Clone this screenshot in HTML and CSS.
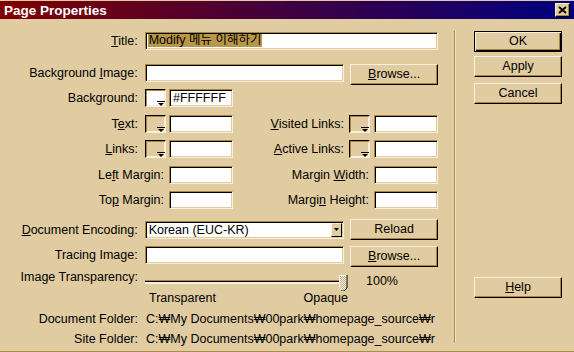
FILE: index.html
```html
<!DOCTYPE html>
<html lang="ko">
<head>
  <meta charset="UTF-8" />
  <title>Page Properties</title>
  <link rel="stylesheet" href="styles.css">
</head>
<body>
<div class="window">
  <div class="titlebar">
    <span class="caption">Page Properties</span>
    <span class="close">
      <svg width="9" height="8" viewBox="0 0 9 8"><path d="M1 1L8 7M8 1L1 7" stroke="#000" stroke-width="1.8" fill="none"/></svg>
    </span>
  </div>

  <div class="content">
    <div class="fields">
      <div class="row r-title">
        <span class="label"><u>T</u>itle:</span>
        <div class="field full"><span class="sel">Modify 메뉴 이해하기</span></div>
      </div>

      <div class="row r-bgimage">
        <span class="label">Background <u>I</u>mage:</span>
        <div class="field half"></div>
        <div class="btn side"><u>B</u>rowse...</div>
      </div>

      <div class="row r-bg">
        <span class="label">Back<u>g</u>round:</span>
        <span class="swatch white"><i class="arrow"></i></span>
        <div class="field small">#FFFFFF</div>
      </div>

      <div class="row r-text">
        <span class="label">T<u>e</u>xt:</span>
        <span class="swatch"><i class="arrow"></i></span>
        <div class="field small"></div>
        <span class="label2"><u>V</u>isited Links:</span>
        <span class="swatch"><i class="arrow"></i></span>
        <div class="field small gap4"></div>
      </div>

      <div class="row r-links">
        <span class="label"><u>L</u>inks:</span>
        <span class="swatch"><i class="arrow"></i></span>
        <div class="field small"></div>
        <span class="label2"><u>A</u>ctive Links:</span>
        <span class="swatch"><i class="arrow"></i></span>
        <div class="field small gap4"></div>
      </div>

      <div class="row r-left">
        <span class="label wide">Le<u>f</u>t Margin:</span>
        <div class="field small"></div>
        <span class="label2 wide">Margin <u>W</u>idth:</span>
        <div class="field small"></div>
      </div>

      <div class="row r-top">
        <span class="label wide">To<u>p</u> Margin:</span>
        <div class="field small"></div>
        <span class="label2 wide">Margi<u>n</u> Height:</span>
        <div class="field small"></div>
      </div>

      <div class="row r-enc">
        <span class="label"><u>D</u>ocument Encoding:</span>
        <div class="field half select">
          <span>Korean (EUC-KR)</span>
          <span class="drop"><svg width="5" height="3" viewBox="0 0 5 3"><path d="M0 0H5L2.5 3Z"/></svg></span>
        </div>
        <div class="btn side">Reload</div>
      </div>

      <div class="row r-trace">
        <span class="label">Tracing Image:</span>
        <div class="field half"></div>
        <div class="btn side"><u>B</u>rowse...</div>
      </div>

      <div class="row r-transp">
        <span class="label">Image Transparency:</span>
        <div class="slider">
          <div class="track"></div>
          <svg class="thumb" width="9" height="16" viewBox="0 0 9 16">
            <defs>
              <pattern id="dots" width="2" height="2" patternUnits="userSpaceOnUse">
                <rect width="2" height="2" fill="#F8F0DC"/>
                <rect width="1" height="1" fill="#C8B084"/>
                <rect x="1" y="1" width="1" height="1" fill="#C8B084"/>
              </pattern>
            </defs>
            <path d="M0.5 0.5H7.5V13L5 15.5H3L0.5 13Z" fill="url(#dots)" stroke="#F8F0DC"/>
            <path d="M8 0V13L5 16H2" stroke="#000" fill="none"/>
          </svg>
        </div>
        <span class="percent">100%</span>
      </div>

      <div class="row r-ends">
        <div class="ends"><span>Transparent</span><span>Opaque</span></div>
      </div>

      <div class="row r-docfolder">
        <span class="label">Document Folder:</span>
        <span class="path">C:₩My Documents₩00park₩homepage_source₩r</span>
      </div>

      <div class="row r-site">
        <span class="label">Site Folder:</span>
        <span class="path">C:₩My Documents₩00park₩homepage_source₩r</span>
      </div>
    </div>

    <div class="divider"></div>

    <div class="actions">
      <div class="btn default">OK</div>
      <div class="btn apply">Apply</div>
      <div class="btn cancel">Cancel</div>
      <div class="btn help"><u>H</u>elp</div>
    </div>
  </div>
</div>
</body>
</html>
```

FILE: styles.css
```css
body {
  margin: 0;
  background-color: #E0CCA0;
  font-family: "Liberation Sans", "Noto Sans CJK KR", sans-serif;
  font-size: 12.5px;
  color: #000;
}

u {
  text-decoration: underline;
  text-underline-offset: 1px;
}

.window {
  width: 574px;
  height: 351px;
  box-sizing: border-box;
  border-bottom: 1px solid #B08C40;
}

/* title bar */
.titlebar {
  margin-top: 1px;
  height: 18px;
  padding: 0 4px;
  display: flex;
  align-items: center;
  justify-content: space-between;
  background: linear-gradient(to right, #800000, #000080);
}

.caption {
  color: #fff;
  font-weight: bold;
  font-size: 13.5px;
}

.close {
  width: 15px;
  height: 14px;
  box-sizing: border-box;
  background-color: #E0CCA0;
  border: 1px solid;
  border-color: #F8F0DC #000 #000 #F8F0DC;
  box-shadow: inset -1px -1px 0 #A8843C;
  display: flex;
  align-items: center;
  justify-content: center;
}

.content {
  display: flex;
  align-items: flex-start;
}

/* left form */
.fields {
  width: 438px;
  padding-top: 13px;
}

.row {
  display: flex;
  align-items: center;
}

.label {
  width: 145px;
  padding-right: 7px;
  box-sizing: border-box;
  text-align: right;
  white-space: nowrap;
  line-height: 16px;
}

.label.wide {
  width: 169px;
  padding-right: 5px;
}

.label2 {
  width: 116px;
  padding-right: 5px;
  box-sizing: border-box;
  text-align: right;
  white-space: nowrap;
}

.label2.wide {
  width: 141px;
}

.field {
  box-sizing: border-box;
  height: 18px;
  padding: 0 3px;
  background-color: #fff;
  border: 1px solid;
  border-color: #A8843C #F8F0DC #F8F0DC #A8843C;
  box-shadow: inset 1px 1px 0 #000, inset -1px -1px 0 #E0CCA0;
  line-height: 16px;
  white-space: nowrap;
  overflow: hidden;
}

.field.full { width: 294px; padding-left: 2px; }
.field.half { width: 200px; }
.field.small { width: 64px; margin-left: 3px; }
.field.small.gap4 { margin-left: 4px; }
.r-left .field.small,
.r-top .field.small { margin-left: 0; }

.sel {
  display: inline-block;
  background-color: #B89848;
  padding: 0 1px;
  line-height: 13px;
  vertical-align: 1px;
}

.select {
  display: flex;
  align-items: center;
  justify-content: space-between;
  padding-right: 1px;
}

.drop {
  width: 11px;
  height: 14px;
  box-sizing: border-box;
  background-color: #E0CCA0;
  border: 1px solid;
  border-color: #F8F0DC #000 #000 #F8F0DC;
  display: flex;
  align-items: center;
  justify-content: center;
}

.swatch {
  position: relative;
  width: 21px;
  height: 18px;
  box-sizing: border-box;
  border: 1px solid;
  border-color: #000 #F8F0DC #F8F0DC #000;
  box-shadow: inset 1px 1px 0 #A8843C, inset -1px -1px 0 #F8F0DC;
  background-color: #E0CCA0;
}

.swatch.white {
  background-color: #fff;
}

.arrow {
  position: absolute;
  right: 1px;
  bottom: 0;
  width: 0;
  height: 0;
  border-left: 3px solid transparent;
  border-right: 3px solid transparent;
  border-top: 3px solid #000;
}

.arrow::before {
  content: "";
  position: absolute;
  left: -4px;
  top: -5px;
  width: 8px;
  height: 1px;
  background-color: #000;
}

/* buttons */
.btn {
  box-sizing: border-box;
  width: 88px;
  height: 21px;
  border: 1px solid;
  border-color: #F8F0DC #000 #000 #F8F0DC;
  box-shadow: inset -1px -1px 0 #A8843C;
  text-align: center;
  line-height: 19px;
  white-space: nowrap;
}

.btn.side {
  margin-left: 6px;
}

.btn.default {
  border-color: #000;
  box-shadow: inset 1px 1px 0 #F8F0DC, inset -1px -1px 0 #000, inset -2px -2px 0 #A8843C;
}

/* row spacing */
.r-bgimage { margin-top: 14px; align-items: flex-start; }
.r-bgimage .label { line-height: 18px; }
.r-bg { margin-top: 4px; }
.r-text { margin-top: 8px; }
.r-links { margin-top: 7px; }
.r-left { margin-top: 8px; }
.r-top { margin-top: 7px; }
.r-enc { margin-top: 10px; }
.r-enc .select { margin-top: 1px; margin-bottom: 1px; }
.r-trace { margin-top: 6px; align-items: flex-start; }
.r-trace .label { line-height: 18px; }

.r-transp {
  margin-top: 2px;
  height: 21px;
  align-items: flex-start;
}

.slider {
  position: relative;
  width: 200px;
  height: 21px;
}

.track {
  margin-top: 11px;
  height: 1px;
  background-color: #000;
  border-top: 1px solid #A8843C;
  border-bottom: 2px solid #F8F0DC;
}

.thumb {
  position: absolute;
  left: 194px;
  top: 6px;
}

.percent {
  margin-left: 21px;
  padding-top: 4px;
  line-height: 16px;
}

.ends {
  width: 203px;
  margin-left: 145px;
  padding-left: 4px;
  box-sizing: border-box;
  display: flex;
  justify-content: space-between;
  line-height: 16px;
}

.r-docfolder { margin-top: 5px; }
.r-site { margin-top: 4px; }

.path {
  padding-left: 1px;
  line-height: 16px;
  white-space: nowrap;
}

/* right side */
.divider {
  margin-left: 16px;
  margin-top: 12px;
  width: 1px;
  height: 312px;
  background-color: #B08C40;
  border-right: 1px solid #F0E4C4;
}

.actions {
  margin-left: 18px;
  padding-top: 12px;
  display: flex;
  flex-direction: column;
}

.btn.apply { margin-top: 4px; }
.btn.cancel { margin-top: 6px; }
.btn.help { margin-top: 173px; }
```
